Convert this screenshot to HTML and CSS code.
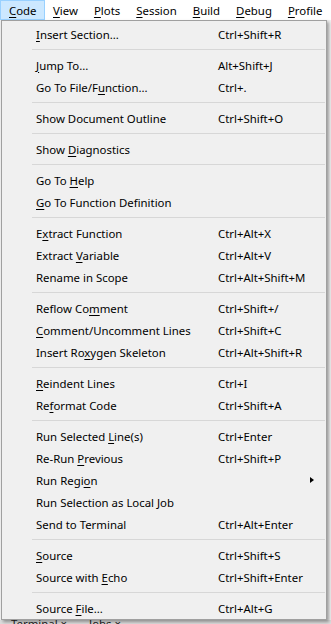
FILE: index.html
```html
<!DOCTYPE html>
<html lang="en">
<head>
  <meta charset="UTF-8">
  <title>Code menu</title>
  <meta name="viewport" content="width=device-width, initial-scale=1">
  <link rel="stylesheet" href="styles.css">
</head>
<body>
<nav class="menubar">
  <span class="top open"><u>C</u>ode</span>
  <span class="top"><u>V</u>iew</span>
  <span class="top"><u>P</u>lots</span>
  <span class="top"><u>S</u>ession</span>
  <span class="top"><u>B</u>uild</span>
  <span class="top"><u>D</u>ebug</span>
  <span class="top"><u>P</u>rofile</span>
</nav>

<div class="popup">
  <div class="item"><span><u>I</u>nsert Section...</span><span>Ctrl+Shift+R</span></div>
  <div class="sep"></div>
  <div class="item"><span><u>J</u>ump To...</span><span>Alt+Shift+J</span></div>
  <div class="item"><span>Go To File/F<u>u</u>nction...</span><span>Ctrl+.</span></div>
  <div class="sep"></div>
  <div class="item"><span>Show Document Outline</span><span>Ctrl+Shift+O</span></div>
  <div class="sep"></div>
  <div class="item"><span>Show <u>D</u>iagnostics</span><span></span></div>
  <div class="sep"></div>
  <div class="item"><span>Go To <u>H</u>elp</span><span></span></div>
  <div class="item"><span><u>G</u>o To Function Definition</span><span></span></div>
  <div class="sep"></div>
  <div class="item"><span>E<u>x</u>tract Function</span><span>Ctrl+Alt+X</span></div>
  <div class="item"><span>Extract <u>V</u>ariable</span><span>Ctrl+Alt+V</span></div>
  <div class="item"><span>Rename in Scope</span><span>Ctrl+Alt+Shift+M</span></div>
  <div class="sep"></div>
  <div class="item"><span>Reflow Co<u>m</u>ment</span><span>Ctrl+Shift+/</span></div>
  <div class="item"><span><u>C</u>omment/Uncomment Lines</span><span>Ctrl+Shift+C</span></div>
  <div class="item"><span>Insert Ro<u>x</u>ygen Skeleton</span><span>Ctrl+Alt+Shift+R</span></div>
  <div class="sep"></div>
  <div class="item"><span><u>R</u>eindent Lines</span><span>Ctrl+I</span></div>
  <div class="item"><span>Re<u>f</u>ormat Code</span><span>Ctrl+Shift+A</span></div>
  <div class="sep"></div>
  <div class="item"><span>Run Selected <u>L</u>ine(s)</span><span>Ctrl+Enter</span></div>
  <div class="item"><span>Re-Run <u>P</u>revious</span><span>Ctrl+Shift+P</span></div>
  <div class="item"><span>Run Regi<u>o</u>n</span><span></span><i class="arrow"></i></div>
  <div class="item"><span>Run Selection as Local Job</span><span></span></div>
  <div class="item"><span>Send to Terminal</span><span>Ctrl+Alt+Enter</span></div>
  <div class="sep"></div>
  <div class="item"><span><u>S</u>ource</span><span>Ctrl+Shift+S</span></div>
  <div class="item"><span>Source with <u>E</u>cho</span><span>Ctrl+Shift+Enter</span></div>
  <div class="sep"></div>
  <div class="item"><span>Source <u>F</u>ile...</span><span>Ctrl+Alt+G</span></div>
</div>

<div class="tabs">
  <span class="tab">Terminal ×</span>
  <span class="tab">Jobs ×</span>
</div>
</body>
</html>
```

FILE: styles.css
```css
*{box-sizing:border-box;}
body{margin:0;background:#f0f0f0;font-family:"Noto Sans",sans-serif;font-size:11.4px;color:#000;overflow:hidden;}
u{text-decoration-thickness:1px;text-underline-offset:2px;}

.menubar{display:flex;height:20px;background:#fff;}
.top{display:flex;align-items:center;padding:0 7px;border:1px solid transparent;}
.top.open{background:#cce8ff;border-color:#99d1ff;width:45px;padding-left:8px;}

.popup{width:326px;height:600px;margin-left:1px;background:#f0f0f0;border:1px solid #a0a0a0;box-shadow:2px 2px 3px rgba(0,0,0,.35);padding-top:2px;position:relative;z-index:1;}
.item{display:grid;grid-template-columns:182px 1fr 16px;align-items:center;height:22px;padding-left:34px;white-space:nowrap;}
.sep{height:9px;margin:0 1px 0 30px;padding-top:4px;}
.sep::before{content:"";display:block;height:1px;background:#d7d7d7;}
.arrow{width:0;height:0;border-left:4px solid #000;border-top:3.5px solid transparent;border-bottom:3.5px solid transparent;}

.tabs{display:flex;gap:22px;height:4px;overflow:hidden;background:#dcdcdc;padding-left:11px;}
.tab{line-height:16px;margin-top:-4px;color:#222;}
```
